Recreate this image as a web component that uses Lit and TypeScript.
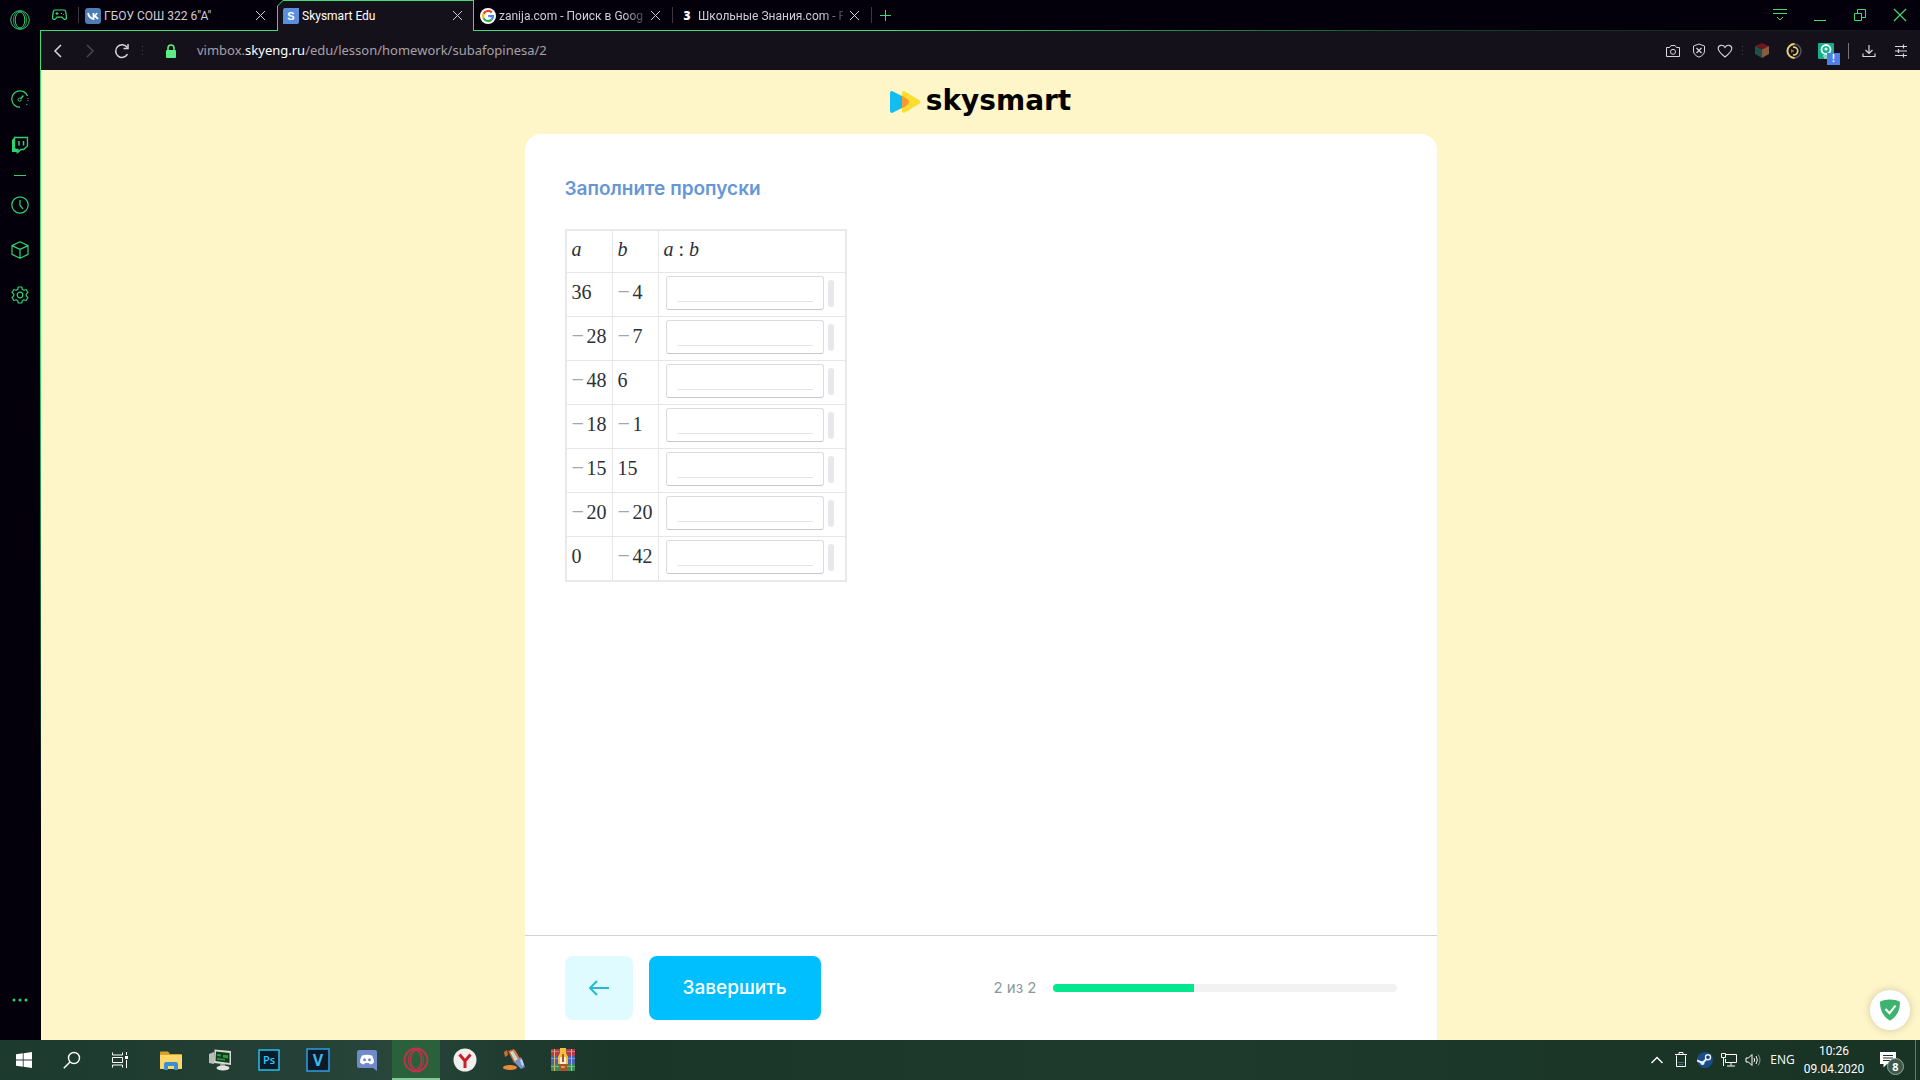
import { LitElement, html, svg, css, nothing, TemplateResult } from "lit";
import { customElement, property } from "lit/decorators.js";
import { classMap } from "lit/directives/class-map.js";

const icon = (w: number, h: number, body: unknown) =>
  html`<svg width=${w} height=${h} viewBox="0 0 ${w} ${h}" fill="none" stroke="currentColor" aria-hidden="true">${body}</svg>`;

const icons = {
  opera: icon(20, 20, svg`<circle cx="10" cy="10" r="9.3"/><ellipse cx="10" cy="10" rx="4.8" ry="8"/><ellipse cx="10" cy="10" rx="6.6" ry="9" stroke-opacity=".7"/>`),
  speed: icon(18, 18, svg`<path d="M9 17.2A8.2 8.2 0 1 1 16.6 6" stroke-width="1.3"/><path d="M17 8v4M15.8 14v1" stroke-dasharray="1 1"/><circle cx="8.6" cy="9.6" r="1.6"/><path d="M9.8 8.4 12.4 5.6" stroke-width="1.4"/>`),
  twitch: icon(18, 18, svg`<path d="M1 4 4 .8V12l3.2 3H9l-3.4 3v-2H1z" fill="currentColor" stroke="none"/><path d="M3.500 1.500h13V10l-4 3.500H9.800L7 16v-2.500H3.500z" stroke-width="1.300"/><path d="M8 5v4.500M12.500 5v4.500" stroke-width="1.500"/>`),
  clock: icon(18, 18, svg`<circle cx="9" cy="9" r="8.200" stroke-width="1.200"/><path d="M9 4v5.400l3 3.400" stroke-width="1.200"/>`),
  cube: icon(18, 18, svg`<path d="M9 .8 17 4.600v8.800L9 17.300 1 13.400V4.600zM1 4.600l8 3.800 8-3.800M9 8.400v8.900" stroke-width="1.200" stroke-linejoin="round"/>`),
  gear: icon(18, 18, svg`<path d="M7.200 1h3.600l.5 2.300 1.500.9 2.300-.7 1.800 3-1.700 1.600v1.800l1.700 1.600-1.800 3-2.300-.7-1.500.9-.5 2.300H7.200l-.5-2.300-1.500-.9-2.300.7-1.800-3 1.700-1.600V8.100L1.100 6.500l1.800-3 2.300.7 1.500-.9z" stroke-width="1.200" stroke-linejoin="round"/><circle cx="9" cy="9" r="2.800" stroke-width="1.200"/>`),
  dots: icon(18, 4, svg`<g fill="currentColor" stroke="none"><circle cx="3" cy="2" r="1.500"/><circle cx="9" cy="2" r="1.500"/><circle cx="15" cy="2" r="1.500"/></g>`),
  gamepad: icon(15, 12, svg`<path d="M3 1h9c1 0 1.500.7 1.700 1.700l.8 5.600c.2 2-1.700 2.800-3 1.500L10 8.200H5L3.500 9.800c-1.300 1.300-3.200.5-3-1.500l.8-5.600C1.500 1.700 2 1 3 1z" stroke-width="1.200"/><path d="M3.500 4.500h3M5 3v3M9 4.500h1M11 5.500h.8"/>`),
  close: icon(11, 11, svg`<path d="M1 1l9 9M10 1l-9 9"/>`),
  plus: icon(11, 11, svg`<path d="M5.500 0v11M0 5.500h11"/>`),
  tabMenu: icon(16, 14, svg`<path d="M1 1.500h14M1 5.500h14M5 9l3 3 3-3"/>`),
  minimize: icon(14, 14, svg`<path d="M1 12.500h12"/>`),
  restore: icon(14, 14, svg`<path d="M1.500 5.500h7v7h-7zM4.500 5V1.500h8v8H9"/>`),
  closeBig: icon(14, 14, svg`<path d="M1 1l12 12M13 1L1 13" stroke-width="1.200"/>`),
  back: icon(10, 14, svg`<path d="M8 1 2 7l6 6" stroke-width="1.500"/>`),
  forward: icon(10, 14, svg`<path d="M2 1l6 6-6 6" stroke-width="1.500"/>`),
  reload: icon(16, 16, svg`<path d="M13.500 11.200A6.300 6.300 0 1 1 13.200 4.500" stroke-width="1.500"/><path d="M14 1v4.500H9.500" stroke-width="1.500"/>`),
  lock: icon(12, 14, svg`<path d="M3 6V4a3 3 0 0 1 6 0v2" stroke-width="1.600"/><rect x="1" y="6" width="10" height="8" rx="1" fill="currentColor" stroke="none"/>`),
  grip: icon(3, 12, svg`<path d="M1.500 1v11" stroke-dasharray="1 3"/>`),
  camera: icon(16, 14, svg`<path d="M1.500 3.500h3l1.500-2h4l1.500 2h3v9h-13z" stroke-linejoin="round"/><circle cx="8" cy="7.800" r="2.500"/>`),
  shield: icon(14, 15, svg`<path d="M7 1 12.500 3v5c0 3-2.500 5-5.500 6.200C4 13 1.500 11 1.500 8V3z"/><path d="M4.500 5l5 5M9.500 5l-5 5" stroke-width="1.200"/>`),
  heart: icon(16, 14, svg`<path d="M8 13C3 9 1.200 7 1.200 4.500 1.200 1 6 0 8 3.500 10 0 14.800 1 14.800 4.500 14.800 7 13 9 8 13z" stroke-width="1.100"/>`),
  extCube: icon(14, 15, svg`<g stroke="none"><path d="M7 0l7 3-7 3.500L0 3z" fill="#6d1723"/><path d="M0 3l7 3.500V15l-7-4z" fill="#1f514b"/><path d="M14 3 7 6.500V15l7-4z" fill="#865b41"/></g>`),
  extCoin: icon(16, 16, svg`<circle cx="8" cy="8" r="7" stroke="#55535c" stroke-width="1.500"/><path d="M8.500 1A7 7 0 1 0 8.500 15" stroke="#e9d36c" stroke-width="1.800"/><path d="M7 4.200a3.900 3.900 0 1 1 0 7.600" stroke="#e9cf6a" stroke-width="1.600"/><path d="M5 6 8.500 8 5 10z" fill="#987a45" stroke="none"/>`),
  extLamp: icon(16, 16, svg`<rect width="16" height="16" rx="1" fill="#19ad8e" stroke="none"/><circle cx="8" cy="6.500" r="4.500" stroke="#e8fffa" stroke-width="1.800"/><circle cx="8" cy="6" r="1.600" fill="#e8fffa" stroke="none"/><path d="M5 13h6M6 15h4" stroke="#e8fffa"/>`),
  download: icon(14, 14, svg`<path d="M7 1v8.500M3.500 6 7 9.500 10.500 6M1 9.500v3h12v-3" stroke-width="1.200"/>`),
  tune: icon(14, 14, svg`<path d="M1 2.500h12M1 7h12M1 11.500h12M9.500.5v4M4.500 5v4M9.500 9.500v4" stroke-width="1.200"/>`),
  arrowLeft: icon(22, 18, svg`<path d="M21 9H2M9 2 2 9l7 7" stroke-width="2"/>`),
  guard: icon(22, 22, svg`<path d="M11 .5c4 0 7 .8 10 2.200 0 8-2.500 14.300-10 19C3.500 17 1 10.700 1 2.700 4 1.300 7 .5 11 .5z" fill="#3eb370" stroke="none"/><path d="M6.500 10l4 4.200 6-7.500" stroke="#fff" stroke-width="2"/>`),
  windows: icon(16, 16, svg`<path d="M0 2.200 6.800 1.300v6.300H0zM7.600 1.200 16 0v7.600H7.600zM0 8.400h6.800v6.300L0 13.800zM7.600 8.400H16V16l-8.400-1.200z" fill="#fff" stroke="none"/>`),
  search: icon(18, 18, svg`<circle cx="11" cy="7" r="5.500" stroke-width="1.400"/><path d="M7 11l-6.200 6.200" stroke-width="1.500"/>`),
  taskView: icon(18, 16, svg`<path d="M1.500.5V3h10V.5M1.500 15.500V13h10v2.500M1.500 5.500h10v5h-10z"/><path d="M15.500 0v3M15.500 8v8"/><path d="M14 4h3v3h-3z" fill="currentColor" stroke="none"/>`),
  folder: icon(22, 19, svg`<g stroke="none"><path d="M0 1.500Q0 .5 1 .5h7l2 2.500h11q1 0 1 1v13q0 1-1 1H1q-1 0-1-1z" fill="#d9a329"/><path d="M0 4h22v13q0 1-1 1H1q-1 0-1-1z" fill="#fbd76d"/><path d="M4 19v-6q0-2 2-2h10q2 0 2 2v6h-4v-4H8v4z" fill="#3d8fd0"/></g>`),
  computer: icon(22, 22, svg`<g stroke="none"><path d="M0 5l5-2v12l-5-1z" fill="#b9beb9"/><path d="M5.500.5 22 2v14L5 14z" fill="#d5dad3"/><path d="M7 2.500 20.500 4v10L6.500 12z" fill="#113d1c"/><path d="M8 5l4 .4v2L8 7zm6 .8 5 .4v3l-5-.4zM8 9l8 1v1.500L8 10.800z" fill="#319846"/><path d="M11 15h5v3h-5z" fill="#949994"/><ellipse cx="14" cy="19" rx="6.500" ry="2.500" fill="#e0e4df"/></g>`),
  photoshop: icon(22, 22, svg`<rect x="1" y="1" width="20" height="20" fill="#071c2b" stroke="#2bbdec" stroke-width="1.500"/><text x="11" y="15" text-anchor="middle" font-family="Open Sans, sans-serif" font-size="11" font-weight="600" fill="#39c6f3" stroke="none">Ps</text>`),
  vegas: icon(24, 24, svg`<rect x="1" y="1" width="22" height="22" fill="#0c1929" stroke="#2b9fe4" stroke-width="1.500"/><text x="12" y="18" text-anchor="middle" font-family="Open Sans, sans-serif" font-size="16" font-weight="700" fill="#3fb6e6" stroke="none">V</text>`),
  discord: icon(20, 21, svg`<g stroke="none"><path d="M2 0h16q2 0 2 2v19l-4-3H2q-2 0-2-2V2q0-2 2-2z" fill="#7289ca"/><path d="M5 5.500q5-1.500 10 0 2 3 2 7-2 2-4 2l-1-1.500H8L7 14.500q-2 0-4-2 0-4 2-7z" fill="#fff"/><circle cx="7.500" cy="9.800" r="1.500" fill="#7289ca"/><circle cx="12.500" cy="9.800" r="1.500" fill="#7289ca"/></g>`),
  operaGx: icon(26, 26, svg`<g stroke="#c5304c"><circle cx="13" cy="13" r="11.500" stroke-width="1.800"/><ellipse cx="13" cy="13" rx="5.500" ry="9.500" stroke-width="1.500"/><ellipse cx="13" cy="13" rx="7.500" ry="10.800"/></g>`),
  yandex: icon(24, 24, svg`<circle cx="12" cy="12" r="11.500" fill="#f0efee" stroke="none"/><path d="M6.500 6.500 12 13l5.500-6.500M12 12.500V20" stroke="#c8202b" stroke-width="3"/>`),
  glue: icon(24, 24, svg`<g stroke="none"><path d="M6 3l6-2 5 10-5 4z" fill="#cf6a31"/><path d="M8 4l4-1.500 5 8-4 3z" fill="#c5dbe3"/><path d="M11 3l2-1 6 10-2 1z" fill="#e0783a"/><path d="M12 14l7-5 4 10-4 2z" fill="#7790c5"/><path d="M18 12l2-1 2 6-2 1z" fill="#c8d3ec"/><path d="M2 4l3-2 1 5-3 2z" fill="#d66a31"/><ellipse cx="8" cy="19.500" rx="7" ry="2.600" fill="#ef8a3c"/></g>`),
  winrar: icon(24, 24, svg`<g stroke="none"><path d="M0 1h24v7H0z" fill="#b43a4e"/><path d="M0 8h24v8H0z" fill="#4a62b4"/><path d="M0 16h24v7H0z" fill="#3d8a52"/><path d="M0 3h24v1H0zM0 10h24v1H0zM0 18h24v1H0z" fill="#ffffff55"/><path d="M3 1h1v22H3zM20 1h1v22h-1z" fill="#d7b070"/><path d="M8 1h8v22H8z" fill="#a4532d"/><path d="M9 0h6v5l2 4v7H7V9l2-4z" fill="#f1be42"/><path d="M9 9h6v7H9z" fill="#f6efdc"/><path d="M11 6h2v8h-2z" fill="#b8531d"/><path d="M10 18h4v2h-4z" fill="#d79b43"/></g>`),
  chevronUp: icon(14, 8, svg`<path d="M1.500 7 7 1.500 12.500 7" stroke-width="1.400"/>`),
  bin: icon(12, 16, svg`<path d="M1.500 3.500v11h9v-11M0 2.500h12M4 2V.5h4V2"/><path d="M3.500 10.500h5M4.500 12.500h4" stroke-dasharray="1 1" stroke="#5ab8d8"/>`),
  steam: icon(16, 16, svg`<circle cx="8" cy="8" r="8" fill="#1b4c8a" stroke="none"/><path d="M0 8.500 5.500 11 10.500 6" stroke="#e8eef4" stroke-width="2"/><circle cx="11" cy="5.200" r="2.500" fill="#153a6b" stroke="#e8eef4" stroke-width="1.400"/><circle cx="5.500" cy="11" r="2" fill="#e8eef4" stroke="none"/>`),
  network: icon(16, 14, svg`<path d="M5 1.500h10.500v8H4.500V6M10 9.500v3M6 13h8M.5.500h4v4h-4zM2.500 4.500V13"/>`),
  volume: icon(16, 14, svg`<path d="M1 5h2.500L7 1.500v11L3.500 9H1zM9 5q1.300 2 0 4M11 3q2.800 4 0 8"/><path d="M13 1.500q4 5.500 0 11" stroke-opacity=".5"/>`),
};

interface Tab { title: string; favicon: TemplateResult; active?: boolean; split?: boolean; }

const tabs: Tab[] = [
  { title: 'ГБОУ СОШ 322 6"А"', favicon: icon(16, 16, svg`<rect width="16" height="16" rx="3" fill="#4d7db4" stroke="none"/><path d="M3 5q1 5 5.500 6V5M8.700 8Q11 7.500 12 5M8.700 8Q11.500 8.500 13 11" stroke="#fff" stroke-width="1.800"/>`) },
  { title: "Skysmart Edu", active: true, favicon: icon(16, 16, svg`<path d="M2 0h14v14q0 2-2 2H0V2q0-2 2-2z" fill="#5a8fdb" stroke="none"/><text x="8" y="12" text-anchor="middle" font-family="Liberation Sans, sans-serif" font-size="11" font-weight="700" fill="#fff" stroke="none">S</text>`) },
  { title: "zanija.com - Поиск в Goog", split: true, favicon: icon(16, 16, svg`<circle cx="8" cy="8" r="8" fill="#fff" stroke="none"/><g stroke-width="2.200"><path d="M11.800 4.600A5 5 0 0 0 3.600 5.700" stroke="#ea4335"/><path d="M3.600 5.700a5 5 0 0 0 0 4.600" stroke="#fbbc05"/><path d="M3.600 10.300a5 5 0 0 0 8 1.300" stroke="#34a853"/><path d="M11.600 11.600A5 5 0 0 0 13 8.200H8.200" stroke="#4285f4"/></g>`) },
  { title: "Школьные Знания.com - Р", split: true, favicon: icon(16, 16, svg`<text x="8" y="12" text-anchor="middle" font-family="Open Sans, sans-serif" font-size="12" font-weight="800" fill="#fff" stroke="none">3</text>`) },
];

@customElement("browser-sidebar")
class BrowserSidebar extends LitElement {
  static styles = css`
    :host { display: flex; flex-direction: column; align-items: center; width: 40px; flex: none; padding: 10px 0 37px; box-sizing: border-box; background: #03000c; color: #2fd070; }
    svg { display: block; }
    button { display: grid; place-items: center; width: 40px; height: 46px; padding: 0; border: 0; background: none; color: inherit; }
    .logo { height: 20px; }
    .group { display: flex; flex-direction: column; margin-top: 46px; }
    .rule { width: 12px; height: 1px; margin: 7px 0 6px; background: #2fd070; }
    .lower { margin: 0; }
    .lower button { height: 45px; }
    .more { height: 6px; margin-top: auto; }
  `;
  render() {
    return html`
      <button class="logo" aria-label="Opera">${icons.opera}</button>
      <div class="group">
        <button aria-label="Speed Dial">${icons.speed}</button>
        <button aria-label="Twitch">${icons.twitch}</button>
      </div>
      <div class="rule"></div>
      <div class="group lower">
        <button aria-label="История">${icons.clock}</button>
        <button aria-label="Расширения">${icons.cube}</button>
        <button aria-label="Настройки">${icons.gear}</button>
      </div>
      <button class="more" aria-label="Ещё">${icons.dots}</button>
    `;
  }
}

@customElement("tab-strip")
class TabStrip extends LitElement {
  static styles = css`
    :host { display: flex; height: 31px; flex: none; color: #3ddb75; font: 12px/30px Roboto, "Open Sans", sans-serif;
      background: linear-gradient(90deg, #3ddb75 0 45%, #15402a 75%, #15111a) bottom / 100% 1px no-repeat #03000c; }
    svg { display: block; flex: none; }
    button { display: grid; place-items: center; padding: 0; border: 0; background: none; color: inherit; height: 24px; }
    .pad { width: 38px; height: 30px; }
    .split { width: 1px; height: 16px; margin-top: 7px; background: #3c3742; }
    .tab { width: 198px; height: 31px; box-sizing: border-box; padding: 1px 1px 0; color: #cfcdd3; }
    .body { display: flex; align-items: center; gap: 3px; height: 30px; box-sizing: border-box; padding: 0 8px 1px 5px; }
    .active { width: 197px; background: #3ddb75; color: #fff; clip-path: polygon(0 6px, 6px 0, 100% 0, 100% 100%, 0 100%); }
    .active .body { background: #15111a; clip-path: polygon(0 5px, 5px 0, 100% 0, 100% 100%, 0 100%); }
    .title { flex: 1; min-width: 0; white-space: nowrap; line-height: 24px; }
    .parted .title { mask-image: linear-gradient(90deg, #000 calc(100% - 20px), #0004); }
    .close { width: 16px; color: #cfcdd3; }
    .new { width: 26px; height: 30px; }
    .window { display: flex; margin-left: auto; }
    .window button { width: 40px; height: 30px; }
  `;
  render() {
    return html`
      <button class="pad" aria-label="GX Corner">${icons.gamepad}</button>
      <div class="split"></div>
      ${tabs.map((t) => html`
        <div class=${classMap({ tab: true, active: !!t.active, parted: !!t.split })}>
          <div class="body">
            ${t.favicon}<span class="title">${t.title}</span>
            <button class="close" aria-label="Закрыть вкладку">${icons.close}</button>
          </div>
        </div>
        ${t.split ? html`<div class="split"></div>` : nothing}`)}
      <button class="new" aria-label="Новая вкладка">${icons.plus}</button>
      <div class="window">
        <button aria-label="Меню вкладок">${icons.tabMenu}</button>
        <button aria-label="Свернуть">${icons.minimize}</button>
        <button aria-label="Восстановить">${icons.restore}</button>
        <button aria-label="Закрыть">${icons.closeBig}</button>
      </div>
    `;
  }
}

@customElement("address-bar")
class AddressBar extends LitElement {
  static styles = css`
    :host { display: flex; align-items: center; height: 39px; flex: none; padding: 0 3px 0 1px; box-sizing: border-box; background: #15111a; color: #d8d6dc; font: 13px/20px "Noto Sans", "Open Sans", sans-serif; }
    svg { display: block; }
    button { display: grid; place-items: center; width: 32px; height: 32px; padding: 0; border: 0; background: none; color: inherit; }
    .off, .grip { color: #4a4650; }
    .lock { width: 50px; color: #5cee84; }
    .grip { width: 8px; display: grid; place-items: center; }
    .url { color: #a5a2aa; text-decoration: none; padding: 0 0 2px 1px; }
    .url b { font-weight: 400; color: #fff; }
    .tools { display: flex; align-items: center; margin-left: auto; }
    .small { width: 26px; }
    .rule { width: 1px; height: 16px; margin: 0 4px 0 6px; background: #77747c; }
    .badged { position: relative; }
    .badge { position: absolute; left: 17px; top: 18px; width: 13px; height: 12px; background: #4f7fe8; color: #fff; font-size: 10px; font-weight: 700; line-height: 12px; text-align: center; }
  `;
  render() {
    return html`
      <button aria-label="Назад">${icons.back}</button>
      <button class="off" aria-label="Вперёд" disabled>${icons.forward}</button>
      <button aria-label="Обновить">${icons.reload}</button>
      <span class="grip">${icons.grip}</span>
      <button class="lock" aria-label="Безопасное соединение">${icons.lock}</button>
      <a class="url" href="#">vimbox.<b>skyeng.ru</b>/edu/lesson/homework/subafopinesa/2</a>
      <div class="tools">
        <button class="small" aria-label="Снимок">${icons.camera}</button>
        <button class="small" aria-label="Блокировка рекламы">${icons.shield}</button>
        <button class="small" aria-label="В закладки">${icons.heart}</button>
        <span class="grip">${icons.grip}</span>
        <button aria-label="Кубик">${icons.extCube}</button>
        <button aria-label="Монета">${icons.extCoin}</button>
        <button class="badged" aria-label="Лампа">${icons.extLamp}<span class="badge">!</span></button>
        <span class="rule"></span>
        <button aria-label="Загрузки">${icons.download}</button>
        <button aria-label="Простая настройка">${icons.tune}</button>
      </div>
    `;
  }
}

@customElement("lesson-table")
class LessonTable extends LitElement {
  @property({ attribute: false }) rows: [number, number][] = [];
  static styles = css`
    table { border: 2px solid #e9e9eb; border-spacing: 0; font: 20px/38px "Liberation Serif", serif; color: #2c3036; }
    th, td { box-sizing: border-box; height: 44px; padding: 0 0 0 5px; text-align: left; vertical-align: top; font-weight: 400; border: solid #e6e6e8; border-width: 0 1px 1px 0; }
    th { height: 42px; line-height: 36px; font-style: italic; }
    .num { width: 46px; white-space: nowrap; }
    .wide { width: 186px; border-right: 0; }
    tbody tr:last-child td { height: 43px; border-bottom: 0; }
    .colon { font-style: normal; }
    .minus { display: inline-block; width: 15px; color: #a4a7ab; font-size: 22px; line-height: 20px; }
    td.wide { padding: 3px 0 0 7px; }
    .answer { display: flex; align-items: center; gap: 4px; }
    .box { display: flex; width: 158px; height: 34px; box-sizing: border-box; padding: 0 10px 7px 11px; border: 1px solid #dcdcdc; border-bottom-color: #c8c8c8; border-radius: 3px; }
    input { width: 100%; min-width: 0; padding: 0; border: 0; border-bottom: 1px solid #e4e4e4; background: none; outline: none; font: inherit; line-height: 20px; }
    .drag { width: 6px; height: 27px; border-radius: 3px; background: #e8e8ec; }
  `;
  private num(n: number) {
    return html`${n < 0 ? html`<span class="minus">−</span>` : nothing}${Math.abs(n)}`;
  }
  render() {
    return html`<table>
      <thead><tr><th class="num">a</th><th class="num">b</th><th class="wide">a <span class="colon">:</span> b</th></tr></thead>
      <tbody>${this.rows.map(([a, b]) => html`<tr>
        <td class="num">${this.num(a)}</td><td class="num">${this.num(b)}</td>
        <td class="wide"><div class="answer">
          <label class="box"><input type="text" aria-label="${a} : ${b}" /></label><span class="drag"></span>
        </div></td></tr>`)}
      </tbody></table>`;
  }
}

@customElement("lesson-page")
class LessonPage extends LitElement {
  private step = 2;
  private total = 2;
  private progress = 41;
  static styles = css`
    :host { flex: 1; display: flex; flex-direction: column; align-items: center; position: relative; background: #fef5c9; font-family: Inter, "Open Sans", sans-serif; }
    .brand { display: flex; align-items: center; gap: 5px; height: 64px; color: #000; text-decoration: none; font: 700 28px/32px "DejaVu Sans", sans-serif; }
    .brand svg { display: block; }
    .word { padding-bottom: 2px; }
    .card { flex: 1; display: flex; flex-direction: column; width: 100%; max-width: 912px; background: #fff; border-radius: 16px 16px 0 0; }
    .task { flex: 1; padding: 40px; }
    h1 { margin: 0 0 25px; font-size: 19px; line-height: 30px; font-weight: 600; color: #6597d4; }
    footer { display: flex; align-items: center; gap: 16px; padding: 20px 40px; border-top: 1px solid #d0d3d4; }
    button { height: 64px; padding: 0; border: 0; border-radius: 8px; font: 500 19px/28px Inter, "Open Sans", sans-serif; }
    .back { display: grid; place-items: center; width: 68px; background: #e0fbff; color: #27b8d4; }
    .finish { width: 172px; background: #00bfff; color: #fff; }
    .status { display: flex; align-items: center; gap: 16px; margin-left: auto; color: #8e9899; font: 15px/20px Inter, "Open Sans", sans-serif; }
    .track { width: 344px; height: 8px; border-radius: 4px; overflow: hidden; background: #f2f2f2; }
    .fill { height: 8px; background: #04e78f; }
    .guard { position: absolute; right: 10px; bottom: 10px; width: 40px; height: 40px; display: grid; place-items: center; border-radius: 20px; background: #fff; box-shadow: 0 0 8px #0000002e; }
  `;
  render() {
    return html`
      <a class="brand" href="#">
        <svg width="31" height="22" viewBox="0 0 31 22" aria-hidden="true">
          <path d="M2 0Q0 0 0 2v18q0 2 2 2l14-7q3-2 3-4t-3-4z" fill="#14bdf0"/>
          <path d="M14 0q-2 0-2 2v18q0 2 2 2l15-9q3-2 0-4z" fill="#fddd2e"/>
          <path d="M12 4.800 16 7q3 2 3 4t-3 4l-4 2.200z" fill="#f59a31"/>
        </svg>
        <span class="word">skysmart</span>
      </a>
      <main class="card">
        <section class="task">
          <h1>Заполните пропуски</h1>
          <lesson-table .rows=${[[36, -4], [-28, -7], [-48, 6], [-18, -1], [-15, 15], [-20, -20], [0, -42]]}></lesson-table>
        </section>
        <footer>
          <button class="back" aria-label="Назад">${icons.arrowLeft}</button>
          <button class="finish">Завершить</button>
          <div class="status">
            <span>${this.step} из ${this.total}</span>
            <div class="track" role="progressbar" aria-valuenow=${this.progress} aria-label="Прогресс">
              <div class="fill" style="width:${this.progress}%"></div>
            </div>
          </div>
        </footer>
      </main>
      <button class="guard" aria-label="AdGuard">${icons.guard}</button>
    `;
  }
}

@customElement("task-bar")
class TaskBar extends LitElement {
  static styles = css`
    :host { display: flex; height: 40px; flex: none; color: #fff; font: 12px/18px "Open Sans", "Noto Sans", sans-serif;
      background: linear-gradient(90deg, #1c3a2d, #243f35 14%, #28463b 20%, #1f3b2f 27%, #1a3628 32%, #1d3a2c 60%, #193324); }
    svg { display: block; }
    button { display: grid; place-items: center; width: 48px; height: 40px; padding: 0; border: 0; background: none; color: inherit; font: inherit; }
    .system, .apps, .tray { display: flex; }
    .apps { gap: 1px; margin-left: 3px; }
    .current { background: #2a603c; box-shadow: inset 0 -2px #86c999; }
    .tray { margin-left: auto; }
    .tray .mini { width: 24px; }
    .lang { width: 35px; }
    .clock { width: 68px; font-family: Roboto, sans-serif; }
    .notes { position: relative; width: 40px; margin-right: 7px; }
    .count { position: absolute; left: 19px; top: 18px; width: 15px; height: 15px; border: 1px solid #9aa89f; border-radius: 9px; background: #3d5a4b; font: 700 11px/15px "Open Sans", sans-serif; }
    .edge { width: 4px; border-left: 1px solid #66786d; }
  `;
  render() {
    const apps: [string, TemplateResult][] = [
      ["Проводник", icons.folder], ["Компьютер", icons.computer], ["Photoshop", icons.photoshop], ["Vegas", icons.vegas],
      ["Discord", icons.discord], ["Opera GX", icons.operaGx], ["Яндекс", icons.yandex], ["Клей", icons.glue], ["WinRAR", icons.winrar],
    ];
    return html`
      <div class="system">
        <button aria-label="Пуск">${icons.windows}</button>
        <button aria-label="Поиск">${icons.search}</button>
        <button aria-label="Представление задач">${icons.taskView}</button>
      </div>
      <div class="apps">
        ${apps.map(([name, art]) => html`<button class=${classMap({ current: name === "Opera GX" })} aria-label=${name}>${art}</button>`)}
      </div>
      <div class="tray">
        <button class="mini" aria-label="Скрытые значки">${icons.chevronUp}</button>
        <button class="mini" aria-label="Корзина">${icons.bin}</button>
        <button class="mini" aria-label="Steam">${icons.steam}</button>
        <button class="mini" aria-label="Сеть">${icons.network}</button>
        <button class="mini" aria-label="Громкость">${icons.volume}</button>
        <button class="lang">ENG</button>
        <button class="clock"><span>10:26<br />09.04.2020</span></button>
        <button class="notes" aria-label="Уведомления">
          ${icon(16, 16, svg`<path d="M0 0h16v12H7l-3.500 3.500V12H0z" fill="#fff" stroke="none"/><path d="M3 3.500h10M3 6h10M3 8.500h7" stroke="#1b3526"/>`)}
          <span class="count">8</span>
        </button>
        <span class="edge"></span>
      </div>
    `;
  }
}

@customElement("app-root")
class AppRoot extends LitElement {
  static styles = css`
    :host { display: flex; flex-direction: column; min-height: 100vh; }
    .window { flex: 1; display: flex; }
    .browser { flex: 1; min-width: 0; display: flex; flex-direction: column; }
    .view { flex: 1; display: flex; flex-direction: column; padding-left: 1px; background: linear-gradient(#3ddb75 30%, #03000c 80%); }
  `;
  render() {
    return html`
      <div class="window">
        <browser-sidebar></browser-sidebar>
        <div class="browser">
          <tab-strip></tab-strip>
          <div class="view">
            <address-bar></address-bar>
            <lesson-page></lesson-page>
          </div>
        </div>
      </div>
      <task-bar></task-bar>
    `;
  }
}
